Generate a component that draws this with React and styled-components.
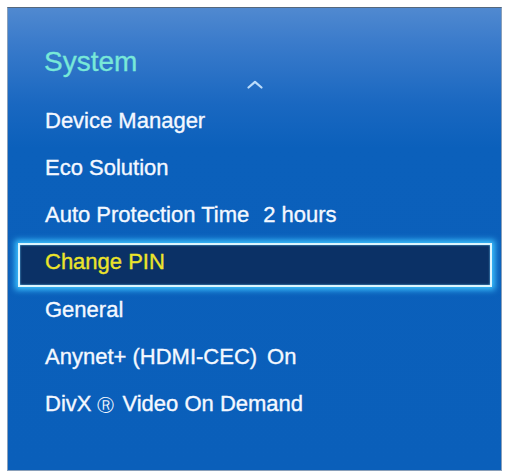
import React from "react";
import styled, { createGlobalStyle } from "styled-components";

const Global = createGlobalStyle`
  html, body { margin: 0; padding: 0; background: #ffffff; }
  body { font-family: "Liberation Sans", Arial, sans-serif; }
`;

const Page = styled.div`
  width: 507px;
  height: 475px;
  padding: 7px 0 0 7px;
  box-sizing: border-box;
`;

const Panel = styled.div`
  width: 495px;
  height: 464px;
  box-sizing: border-box;
  border: 1px solid #8aa0ba;
  border-top-color: #56687c;
  background: linear-gradient(
    to bottom,
    #5089d0 0px,
    #3a7bcb 35px,
    #1a68c1 95px,
    #0b60bb 140px,
    #0a5fba 100%
  );
  display: flex;
  flex-direction: column;
`;

const Title = styled.div`
  padding: 38px 0 0 36px;
  height: 32px;
  line-height: 32px;
  font-size: 28px;
  color: #78e8d8;
  -webkit-text-stroke: 0.3px #78e8d8;
`;

const CaretRow = styled.div`
  height: 19px;
  display: flex;
  justify-content: center;
  align-items: flex-start;
  padding-top: 2px;
  box-sizing: border-box;
`;

const List = styled.div`
  display: flex;
  flex-direction: column;
`;

const Item = styled.div`
  height: 47px;
  line-height: 47px;
  padding-left: 37px;
  font-size: 22px;
  color: #f4f8ff;
  -webkit-text-stroke: 0.35px #f4f8ff;
  white-space: nowrap;
`;

const Selected = styled.div`
  height: 44px;
  box-sizing: border-box;
  margin: 5px 9px -1px 10px;
  padding-left: 25px;
  line-height: 33px;
  font-size: 22px;
  color: #ece42a;
  -webkit-text-stroke: 0.35px #ece42a;
  white-space: nowrap;
  background: #0b3166;
  border: 2px solid #dcf6ff;
  box-shadow: 0 0 6px 3px #3cc2ff, inset 0 0 2px #6fd0ff;
`;

const Value = styled.span`
  margin-left: ${(p) => p.$gap}px;
`;

const Mark = styled.span`
  font-family: "DejaVu Sans", sans-serif;
  font-size: 17px;
  -webkit-text-stroke: 0;
  margin: 0 8px 0 6px;
`;

const items = [
  { text: "Device Manager" },
  { text: "Eco Solution" },
  { text: "Auto Protection Time", value: "2 hours", gap: 14 },
  { text: "Change PIN", selected: true },
  { text: "General" },
  { text: "Anynet+ (HDMI-CEC)", value: "On", gap: 10 },
  {
    text: (
      <>
        DivX<Mark>{"\u24C7"}</Mark>Video On Demand
      </>
    ),
  },
];

function Caret() {
  return (
    <svg width="16" height="9" viewBox="0 0 16 9" fill="none">
      <path
        d="M1.5 7.5 L8 1.8 L14.5 7.5"
        stroke="#bcdcfa"
        strokeWidth="2.2"
        strokeLinecap="round"
        strokeLinejoin="round"
      />
    </svg>
  );
}

export default function App() {
  return (
    <>
      <Global />
      <Page>
        <Panel>
          <Title>System</Title>
          <CaretRow>
            <Caret />
          </CaretRow>
          <List>
            {items.map((it, i) => {
              const Row = it.selected ? Selected : Item;
              return (
                <Row key={i}>
                  {it.text}
                  {it.value && <Value $gap={it.gap}>{it.value}</Value>}
                </Row>
              );
            })}
          </List>
        </Panel>
      </Page>
    </>
  );
}
